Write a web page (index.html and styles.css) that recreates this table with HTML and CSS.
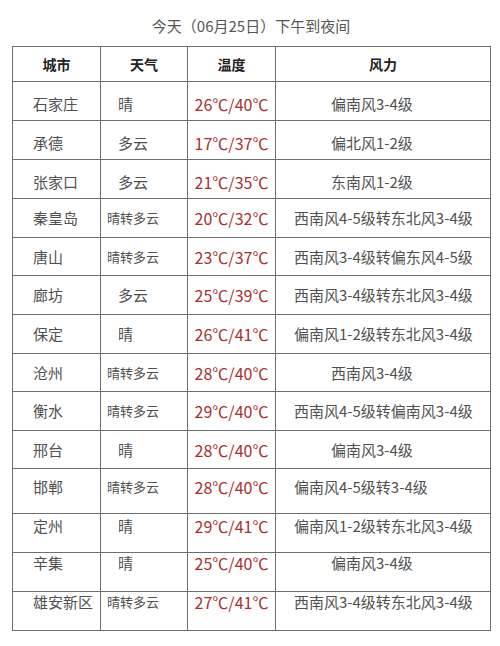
FILE: index.html
```html
<!DOCTYPE html>
<html lang="zh-CN">
<head>
<meta charset="utf-8">
<title>今天（06月25日）下午到夜间</title>
<link rel="stylesheet" href="styles.css">
</head>
<body>
<div class="page">
  <h1 class="title">今天（06月25日）下午到夜间</h1>
  <table class="wx">
    <colgroup>
      <col class="c-city"><col class="c-sky"><col class="c-temp"><col class="c-wind">
    </colgroup>
    <thead>
      <tr><th>城市</th><th>天气</th><th>温度</th><th>风力</th></tr>
    </thead>
    <tbody>
      <tr class="low"><td class="city">石家庄</td><td class="sky">晴</td><td class="temp">26℃/40℃</td><td class="wind">偏南风3-4级</td></tr>
      <tr class="low"><td class="city">承德</td><td class="sky">多云</td><td class="temp">17℃/37℃</td><td class="wind">偏北风1-2级</td></tr>
      <tr class="low"><td class="city">张家口</td><td class="sky">多云</td><td class="temp">21℃/35℃</td><td class="wind">东南风1-2级</td></tr>
      <tr><td class="city">秦皇岛</td><td class="sky sm">晴转多云</td><td class="temp">20℃/32℃</td><td class="wind long">西南风4-5级转东北风3-4级</td></tr>
      <tr class="short"><td class="city">唐山</td><td class="sky sm">晴转多云</td><td class="temp">23℃/37℃</td><td class="wind long">西南风3-4级转偏东风4-5级</td></tr>
      <tr><td class="city">廊坊</td><td class="sky">多云</td><td class="temp">25℃/39℃</td><td class="wind long">西南风3-4级转东北风3-4级</td></tr>
      <tr><td class="city">保定</td><td class="sky">晴</td><td class="temp">26℃/41℃</td><td class="wind long">偏南风1-2级转东北风3-4级</td></tr>
      <tr class="short"><td class="city">沧州</td><td class="sky sm">晴转多云</td><td class="temp">28℃/40℃</td><td class="wind">西南风3-4级</td></tr>
      <tr><td class="city">衡水</td><td class="sky sm">晴转多云</td><td class="temp">29℃/40℃</td><td class="wind long">西南风4-5级转偏南风3-4级</td></tr>
      <tr class="short"><td class="city">邢台</td><td class="sky">晴</td><td class="temp">28℃/40℃</td><td class="wind">偏南风3-4级</td></tr>
      <tr class="tall up1"><td class="city">邯郸</td><td class="sky sm">晴转多云</td><td class="temp">28℃/40℃</td><td class="wind long">偏南风4-5级转3-4级</td></tr>
      <tr class="up2"><td class="city">定州</td><td class="sky">晴</td><td class="temp">29℃/41℃</td><td class="wind long">偏南风1-2级转东北风3-4级</td></tr>
      <tr class="up3"><td class="city">辛集</td><td class="sky">晴</td><td class="temp">25℃/40℃</td><td class="wind">偏南风3-4级</td></tr>
      <tr class="up3 short"><td class="city">雄安新区</td><td class="sky sm">晴转多云</td><td class="temp">27℃/41℃</td><td class="wind long">西南风3-4级转东北风3-4级</td></tr>
    </tbody>
  </table>
</div>
</body>
</html>
```
FILE: styles.css
```css
html, body {
  margin: 0;
  padding: 0;
  background: #ffffff;
}

body {
  font-family: "Noto Sans CJK SC", "Noto Sans", sans-serif;
  color: #505050;
}

.page {
  padding: 0 10px 0 12px;
}

.title {
  margin: 0;
  padding-top: 16px;
  height: 30px;
  line-height: 20px;
  font-size: 15px;
  font-weight: 400;
  color: #555555;
  text-align: center;
}

.wx {
  border-collapse: collapse;
  table-layout: fixed;
  width: 478px;
}

.c-city { width: 88px; }
.c-sky { width: 87px; }
.c-temp { width: 88px; }
.c-wind { width: 215px; }

.wx th,
.wx td {
  box-sizing: border-box;
  border: 1px solid #6e6e6e;
  padding: 0;
  vertical-align: middle;
  white-space: nowrap;
  line-height: 20px;
}

.wx th {
  height: 35px;
  font-size: 14px;
  font-weight: 700;
  color: #222222;
  text-align: center;
}

.wx td {
  height: 39px;
  font-size: 15px;
}

.wx td.city {
  padding-left: 20px;
}

.wx td.sky {
  padding-left: 17px;
}

.wx td.sky.sm {
  padding-left: 6px;
  font-size: 13px;
}

.wx td.temp {
  text-align: center;
  font-size: 16px;
  color: #a8302f;
}

.wx td.wind {
  padding-left: 55px;
}

.wx td.wind.long {
  padding-left: 18px;
}

.wx .low td {
  padding-top: 6px;
}

.wx .short td {
  height: 38px;
}

.wx .tall td {
  height: 45px;
}

.wx .up1 td {
  padding-bottom: 9px;
}

.wx .up2 td {
  padding-bottom: 15px;
}

.wx .up3 td {
  padding-bottom: 18px;
}
```
